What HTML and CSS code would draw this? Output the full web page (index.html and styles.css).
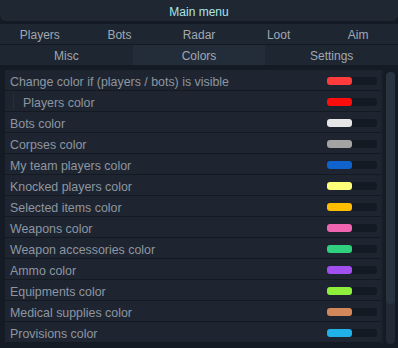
FILE: index.html
```html
<!DOCTYPE html>
<html lang="en">

<head>
    <meta charset="UTF-8">
    <title>Main menu</title>
    <link rel="stylesheet" href="styles.css">
</head>

<body>
    <header class="title">Main menu</header>

    <nav class="tabs top">
        <span>Players</span>
        <span>Bots</span>
        <span>Radar</span>
        <span>Loot</span>
        <span>Aim</span>
    </nav>

    <nav class="tabs sub">
        <span>Misc</span>
        <span class="active">Colors</span>
        <span>Settings</span>
    </nav>

    <main>
        <ul class="list">
            <li><span>Change color if (players / bots) is visible</span><i class="swatch c-visible"></i></li>
            <li class="child"><span>Players color</span><i class="swatch c-players"></i></li>
            <li><span>Bots color</span><i class="swatch c-bots"></i></li>
            <li><span>Corpses color</span><i class="swatch c-corpses"></i></li>
            <li><span>My team players color</span><i class="swatch c-team"></i></li>
            <li><span>Knocked players color</span><i class="swatch c-knocked"></i></li>
            <li><span>Selected items color</span><i class="swatch c-selected"></i></li>
            <li><span>Weapons color</span><i class="swatch c-weapons"></i></li>
            <li><span>Weapon accessories color</span><i class="swatch c-accessories"></i></li>
            <li><span>Ammo color</span><i class="swatch c-ammo"></i></li>
            <li><span>Equipments color</span><i class="swatch c-equip"></i></li>
            <li><span>Medical supplies color</span><i class="swatch c-medical"></i></li>
            <li><span>Provisions color</span><i class="swatch c-provisions"></i></li>
        </ul>
        <div class="scrollbar">
            <div class="thumb"></div>
        </div>
    </main>
</body>

</html>
```

FILE: styles.css
```css
* {
    font-family: 'Liberation Sans', Arial, sans-serif;
    box-sizing: border-box;
}

body {
    margin: 0;
    background: #151b24;
    font-size: 12px;
    color: #8d96a1;
    height: 348px;
    overflow: hidden;
}

.title {
    height: 21px;
    padding-top: 2px;
    display: flex;
    justify-content: center;
    align-items: center;
    background: #1f2733;
    color: #a9e6e6;
    border-radius: 0 0 6px 6px;
    margin-bottom: 3px;
}

.tabs {
    display: grid;
    height: 21px;
    background: #1e2631;
    color: #a1a9b3;

    span {
        display: flex;
        justify-content: center;
        align-items: center;
        padding-top: 2px;
    }

    &.top {
        grid-template-columns: repeat(5, 1fr);
        border-bottom: 1px solid #141a22;
    }

    &.sub {
        grid-template-columns: repeat(3, 1fr);
        height: 20px;
    }

    .active {
        background: #232c39;
    }
}

main {
    display: flex;
    gap: 3px;
    margin-top: 5px;
    padding: 0 3px 0 5px;
}

.list {
    flex: 1;
    list-style: none;
    margin: 0;
    padding: 0;
    font-size: 12.4px;
    border-right: 2px solid #1a212b;

    li {
        display: flex;
        align-items: center;
        justify-content: space-between;
        height: 21px;
        padding: 1px 4px 0 5px;
        background: #1e2530;
        border-bottom: 1px solid #141a22;
    }

    li > span {
        padding-top: 2px;
    }

    .child span {
        border-left: 1px solid #262f3c;
        margin-left: 3px;
        padding-left: 9px;
    }
}

.swatch {
    width: 50px;
    height: 8px;
    border-radius: 3px;
    background: #141a23;
    position: relative;

    &::before {
        content: '';
        position: absolute;
        left: 0;
        top: 0;
        width: 25px;
        height: 8px;
        border-radius: 3px;
        background: var(--c);
    }
}

.c-visible { --c: #ff3b3b; }
.c-players { --c: #ff0d0d; }
.c-bots { --c: #e6e6e6; }
.c-corpses { --c: #a3a3a3; }
.c-team { --c: #1062cc; }
.c-knocked { --c: #ffff7a; }
.c-selected { --c: #ffbf00; }
.c-weapons { --c: #f064b0; }
.c-accessories { --c: #2fd07e; }
.c-ammo { --c: #a24ff0; }
.c-equip { --c: #8ff03c; }
.c-medical { --c: #d4885a; }
.c-provisions { --c: #1fb1e8; }

.scrollbar {
    width: 9px;
    margin-top: 2px;
    height: 272px;
    border-radius: 4px;
    background: #222a36;
    overflow: hidden;

    .thumb {
        height: 232px;
        border-radius: 4px;
        background: #2a3340;
    }
}
```
